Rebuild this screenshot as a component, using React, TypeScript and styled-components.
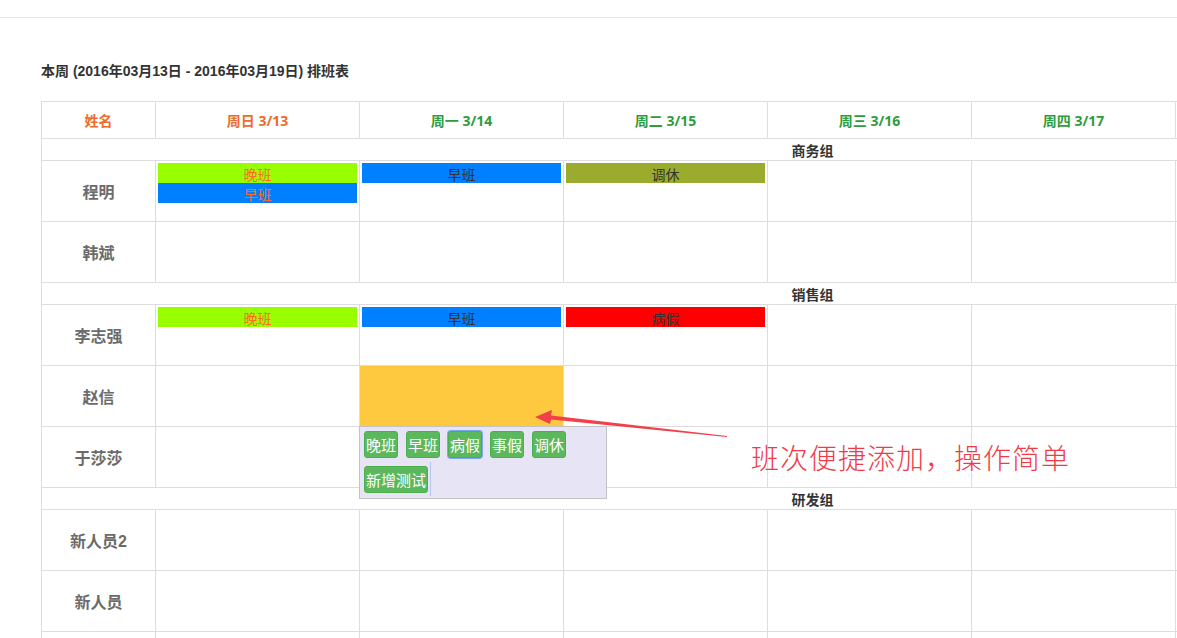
import React from 'react';
import styled, { createGlobalStyle } from 'styled-components';

const GlobalStyle = createGlobalStyle`
    html, body {
        margin: 0;
        padding: 0;
        background: #fff;
        overflow: hidden;
        font-family: 'Liberation Sans', 'Noto Sans CJK SC', sans-serif;
    }
`;

const colors = {
    border: '#dddddd',
    orange: '#f06a2c',
    green: '#2f9c3b',
    text: '#333333',
    name: '#6b6b6b'
};

const Page = styled.div`
    position: relative;
    width: 1177px;
    height: 638px;
    overflow: hidden;
`;

const TopBar = styled.div`
    height: 17px;
    border-bottom: 1px solid #e8e8e8;
`;

const Content = styled.div`
    padding: 0 0 0 41px;
`;

const Title = styled.h3`
    margin: 0;
    padding: 44px 0 0;
    height: 39px;
    line-height: 19px;
    font-size: 14px;
    font-weight: bold;
    color: ${colors.text};
`;

const Table = styled.table`
    width: 1542px;
    table-layout: fixed;
    border-collapse: collapse;
`;

const HeadCell = styled.th<{ $today?: boolean }>`
    height: 36px;
    padding: 0;
    border: 1px solid ${colors.border};
    font-size: 14px;
    font-weight: bold;
    font-family: 'Open Sans', 'Noto Sans CJK SC', sans-serif;
    color: ${(p) => (p.$today ? colors.orange : colors.green)};
    text-align: center;
    vertical-align: middle;
`;

const GroupCell = styled.td`
    height: 21px;
    padding: 0;
    border: 1px solid ${colors.border};
    font-size: 14px;
    font-weight: bold;
    color: ${colors.text};
    text-align: center;
    vertical-align: middle;
`;

const NameCell = styled.td`
    height: 58px;
    padding: 0;
    border: 1px solid ${colors.border};
    font-size: 16px;
    font-weight: bold;
    color: ${colors.name};
    text-align: center;
    vertical-align: middle;
`;

const DayCell = styled.td<{ $active?: boolean }>`
    position: relative;
    height: 58px;
    padding: 2px 2px 0;
    border: 1px solid ${colors.border};
    vertical-align: top;
    background: ${(p) => (p.$active ? '#ffc93f' : 'transparent')};
`;

const ShiftBar = styled.div<{ $bg: string; $fg: string }>`
    height: 20px;
    line-height: 22px;
    background: ${(p) => p.$bg};
    color: ${(p) => p.$fg};
    font-size: 14px;
    text-align: center;
    font-family: 'Noto Sans CJK SC', sans-serif;
`;

const Popup = styled.div`
    position: absolute;
    z-index: 2;
    left: -1px;
    top: 100%;
    width: 237px;
    height: 63px;
    padding: 4px 5px 4px 4px;
    background: #e6e4f5;
    border: 1px solid #c3c3c3;
    display: flex;
    flex-wrap: wrap;
    align-content: flex-start;
    gap: 8px 8px;
`;

const ShiftButton = styled.button<{ $focused?: boolean }>`
    height: 27px;
    padding: 0 1px;
    margin: 0;
    border: 1px solid #4cae4c;
    border-radius: 3px;
    background: #5cb85c;
    color: #fff;
    font-size: 15px;
    line-height: 25px;
    font-family: 'Noto Sans CJK SC', sans-serif;
    box-shadow: ${(p) => (p.$focused ? '0 0 0 1px #7aa7f5' : 'none')};
`;

const Caret = styled.span`
    width: 1px;
    height: 34px;
    margin: -4px 0 0 -6px;
    background: #b7c6f0;
`;

const Note = styled.div`
    position: absolute;
    left: 751px;
    top: 440px;
    font-size: 28px;
    letter-spacing: 1px;
    line-height: 34px;
    color: #f03a47;
    font-family: 'Noto Sans CJK SC', sans-serif;
    font-weight: 300;
    white-space: nowrap;
`;

const Arrow = styled.svg`
    position: absolute;
    left: 530px;
    top: 404px;
    pointer-events: none;
`;

type Shift = { label: string; bg: string; fg: string };

const SHIFT = {
    night: '#99ff00',
    early: '#0080ff',
    rest: '#9aab2d',
    sick: '#ff0000'
};

const days = ['周日 3/13', '周一 3/14', '周二 3/15', '周三 3/16', '周四 3/17', '周五 3/18', '周六 3/19'];

type Person = { name: string; shifts?: Record<number, Shift[]>; active?: number };
type Group = { name: string; people: Person[] };

const groups: Group[] = [
    {
        name: '商务组',
        people: [
            {
                name: '程明',
                shifts: {
                    0: [
                        { label: '晚班', bg: SHIFT.night, fg: '#ff6a2a' },
                        { label: '早班', bg: SHIFT.early, fg: '#ff6a2a' }
                    ],
                    1: [{ label: '早班', bg: SHIFT.early, fg: '#333' }],
                    2: [{ label: '调休', bg: SHIFT.rest, fg: '#333' }]
                }
            },
            { name: '韩斌' }
        ]
    },
    {
        name: '销售组',
        people: [
            {
                name: '李志强',
                shifts: {
                    0: [{ label: '晚班', bg: SHIFT.night, fg: '#ff6a2a' }],
                    1: [{ label: '早班', bg: SHIFT.early, fg: '#333' }],
                    2: [{ label: '病假', bg: SHIFT.sick, fg: '#333' }]
                }
            },
            { name: '赵信', active: 1 },
            { name: '于莎莎' }
        ]
    },
    {
        name: '研发组',
        people: [{ name: '新人员2' }, { name: '新人员' }, { name: '' }]
    }
];

const options = ['晚班', '早班', '病假', '事假', '调休', '新增测试'];

function ShiftPicker() {
    return (
        <Popup>
            {options.map((o) => (
                <ShiftButton key={o} $focused={o === '病假'}>
                    {o}
                </ShiftButton>
            ))}
            <Caret />
        </Popup>
    );
}

function App() {
    return (
        <Page>
            <GlobalStyle />
            <TopBar />
            <Content>
                <Title>本周 (2016年03月13日 - 2016年03月19日) 排班表</Title>
                <Table>
                    <colgroup>
                        <col style={{ width: 114 }} />
                        {days.map((d) => (
                            <col key={d} style={{ width: 204 }} />
                        ))}
                    </colgroup>
                    <thead>
                        <tr>
                            <HeadCell $today>姓名</HeadCell>
                            {days.map((d, i) => (
                                <HeadCell key={d} $today={i === 0}>
                                    {d}
                                </HeadCell>
                            ))}
                        </tr>
                    </thead>
                    <tbody>
                        {groups.map((g) => (
                            <React.Fragment key={g.name}>
                                <tr>
                                    <GroupCell colSpan={8}>{g.name}</GroupCell>
                                </tr>
                                {g.people.map((p, pi) => (
                                    <tr key={p.name + pi}>
                                        <NameCell>{p.name}</NameCell>
                                        {days.map((d, di) => (
                                            <DayCell key={d} $active={p.active === di}>
                                                {(p.shifts?.[di] || []).map((s, si) => (
                                                    <ShiftBar key={si} $bg={s.bg} $fg={s.fg}>
                                                        {s.label}
                                                    </ShiftBar>
                                                ))}
                                                {p.active === di && <ShiftPicker />}
                                            </DayCell>
                                        ))}
                                    </tr>
                                ))}
                            </React.Fragment>
                        ))}
                    </tbody>
                </Table>
            </Content>
            <Arrow width="205" height="40" viewBox="0 0 205 40">
                <polygon points="5,13 22,6 21,11.5 197,32 197,33 21,15.5 20,20" fill="#f2404a" />
            </Arrow>
            <Note>班次便捷添加，操作简单</Note>
        </Page>
    );
}

export default App;
